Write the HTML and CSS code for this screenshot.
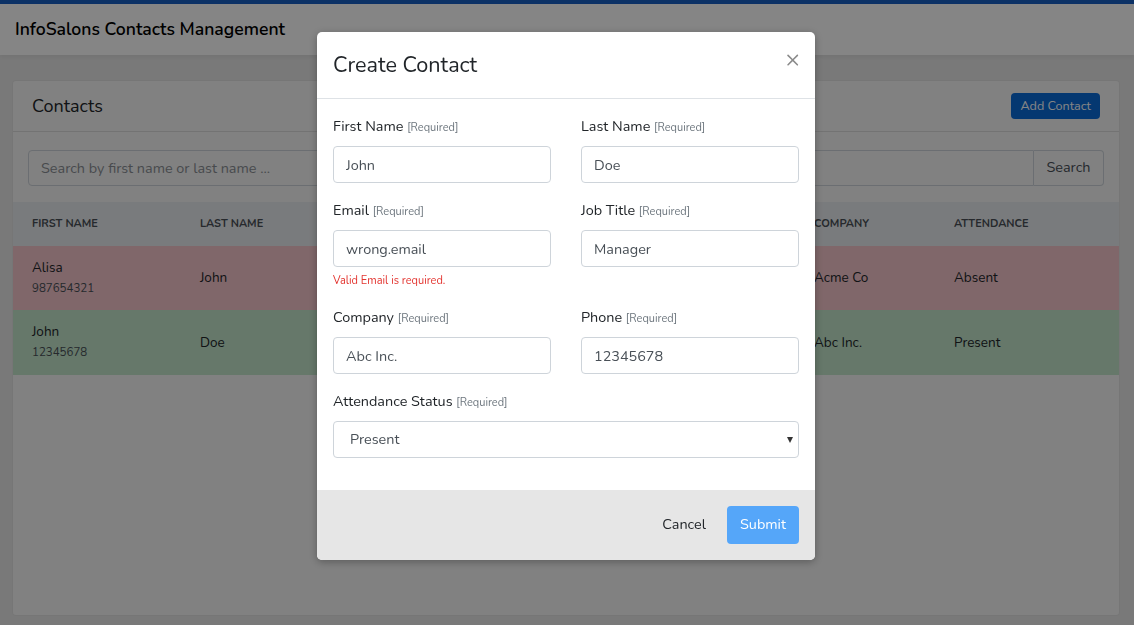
FILE: index.html
```html
<!DOCTYPE html>
<html lang="en">
<head>
<meta charset="utf-8">
<title>InfoSalons Contacts Management</title>
<link rel="stylesheet" href="styles.css">
</head>
<body>
<div class="app">
  <nav class="navbar">
    <span class="brand">InfoSalons Contacts Management</span>
  </nav>
  <main class="main">
    <section class="card">
      <div class="card-header">
        <h2 class="card-title">Contacts</h2>
        <button class="btn btn-primary btn-sm" type="button">Add Contact</button>
      </div>
      <div class="card-body">
        <div class="input-group">
          <input class="form-control search-input" type="text" placeholder="Search by first name or last name ...">
          <button class="btn btn-outline" type="button">Search</button>
        </div>
      </div>
      <table class="table">
        <colgroup>
          <col class="c-first"><col class="c-last"><col class="c-hidden"><col class="c-company"><col class="c-att">
        </colgroup>
        <thead>
          <tr>
            <th>First Name</th><th>Last Name</th><th></th><th>Company</th><th>Attendance</th>
          </tr>
        </thead>
        <tbody>
          <tr class="row-danger">
            <td><div class="name">Alisa</div><div class="phone">987654321</div></td>
            <td>John</td><td></td><td>Acme Co</td><td>Absent</td>
          </tr>
          <tr class="row-success">
            <td><div class="name">John</div><div class="phone">12345678</div></td>
            <td>Doe</td><td></td><td>Abc Inc.</td><td>Present</td>
          </tr>
        </tbody>
      </table>
    </section>
  </main>
</div>

<div class="backdrop"></div>

<div class="modal" role="dialog">
  <div class="modal-header">
    <h4 class="modal-title">Create Contact</h4>
    <button class="close" type="button" aria-label="Close">&times;</button>
  </div>
  <form class="modal-body">
    <div class="form-row">
      <div class="form-group">
        <label class="label">First Name <small class="req">[Required]</small></label>
        <input class="form-control" type="text" value="John">
      </div>
      <div class="form-group">
        <label class="label">Last Name <small class="req">[Required]</small></label>
        <input class="form-control" type="text" value="Doe">
      </div>
    </div>
    <div class="form-row">
      <div class="form-group">
        <label class="label">Email <small class="req">[Required]</small></label>
        <input class="form-control" type="text" value="wrong.email">
        <div class="error">Valid Email is required.</div>
      </div>
      <div class="form-group">
        <label class="label">Job Title <small class="req">[Required]</small></label>
        <input class="form-control" type="text" value="Manager">
      </div>
    </div>
    <div class="form-row">
      <div class="form-group">
        <label class="label">Company <small class="req">[Required]</small></label>
        <input class="form-control" type="text" value="Abc Inc.">
      </div>
      <div class="form-group">
        <label class="label">Phone <small class="req">[Required]</small></label>
        <input class="form-control" type="text" value="12345678">
      </div>
    </div>
    <div class="form-group last">
      <label class="label">Attendance Status <small class="req">[Required]</small></label>
      <div class="select-wrap">
        <select class="form-control select">
          <option>Present</option>
          <option>Absent</option>
        </select>
      </div>
    </div>
  </form>
  <div class="modal-footer">
    <button class="btn btn-link" type="button">Cancel</button>
    <button class="btn btn-submit" type="button">Submit</button>
  </div>
</div>
</body>
</html>
```
FILE: styles.css
```css
* { box-sizing: border-box; }
html, body { margin: 0; padding: 0; }
body {
  font-family: "Nunito", "Lato", "Open Sans", sans-serif;
  font-size: 14.4px;
  line-height: 1.6;
  color: #212529;
  background: #e8e8e8;
  height: 625px;
  overflow: hidden;
}
.app { border-top: 4px solid #1860c4; }
.navbar {
  height: 51px;
  background: #fff;
  display: flex;
  align-items: center;
  padding: 0 15px;
  box-shadow: 0 2px 4px rgba(0,0,0,.06);
}
.brand { font-size: 17.6px; font-weight: 600; color: #000; }
.main { padding: 25px 14px 0 12px; }
.card {
  background: #f7f7f7;
  border-radius: 4px;
  border: 1px solid rgba(0,0,0,.08);
  height: 536px;
}
.card-header {
  height: 51px;
  display: flex;
  align-items: center;
  justify-content: space-between;
  padding: 0 19px 0 19px;
  border-bottom: 1px solid rgba(0,0,0,.1);
}
.card-title { margin: 0; font-size: 18px; font-weight: 400; }
.btn {
  font-family: inherit;
  border: 1px solid transparent;
  border-radius: 4px;
  cursor: pointer;
  font-size: 14.4px;
  line-height: 1.6;
  padding: 6px 12px;
}
.btn-primary { background: #0a6bd9; color: #fff; }
.btn-sm { font-size: 12.6px; padding: 3px 8px; line-height: 1.5; }
.card-body { padding: 18px 15px 16px 15px; }
.input-group { display: flex; }
.form-control {
  display: block;
  width: 100%;
  height: 37px;
  padding: 6px 12px;
  font-family: inherit;
  font-size: 14.4px;
  line-height: 1.6;
  color: #495057;
  background: #fff;
  border: 1px solid #ced4da;
  border-radius: 4px;
}
.search-input { flex: 1; border-radius: 4px 0 0 4px; background: #f7f7f7; height: 36px; }
.search-input::placeholder { color: #8a8f95; }
.btn-outline {
  border-color: #ced4da;
  border-left: none;
  background: #f7f7f7;
  color: #495057;
  border-radius: 0 4px 4px 0;
  width: 70px;
  height: 36px;
  padding: 0;
}
.table { width: 100%; border-collapse: collapse; table-layout: fixed; }
.c-first { width: 168px; }
.c-last { width: 168px; }
.c-hidden { width: 446px; }
.c-company { width: 140px; }
.c-att { width: auto; }
.table th {
  background: #e9ecef;
  color: #495057;
  text-transform: uppercase;
  font-size: 11px;
  font-weight: 700;
  text-align: left;
  height: 44px;
  padding: 0 19px;
}
.table td {
  height: 64px;
  padding: 0 19px;
  font-size: 13.5px;
  color: #212529;
  vertical-align: middle;
}
.row-danger td { background: #f5c6cb; }
.row-success td { background: #c3e6cb; }
.row-success td { height: 65px; }
.name { font-size: 13.5px; line-height: 20px; }
.phone { font-size: 11.5px; line-height: 21px; color: #495057; }

.backdrop {
  position: fixed;
  inset: 0;
  background: rgba(0,0,0,.48);
}
.modal {
  position: fixed;
  top: 32px;
  left: 317px;
  width: 498px;
  background: #fff;
  border-radius: 5px;
  box-shadow: 0 2px 8px rgba(0,0,0,.3);
  overflow: hidden;
}
.modal-header {
  height: 67px;
  display: flex;
  align-items: center;
  justify-content: space-between;
  padding: 0 16px;
  border-bottom: 1px solid #dee2e6;
}
.modal-title { margin: 0; font-size: 21.6px; font-weight: 400; color: #212529; }
.close {
  background: none;
  border: none;
  font-size: 24px;
  line-height: 1;
  color: #8a8a8a;
  padding: 0;
  margin-right: -1px;
  margin-top: -13px;
  font-family: "Nunito", "Lato", sans-serif;
  cursor: pointer;
}
.modal-body { padding: 16px 16px 16px 16px; display: block; }
.form-row { display: flex; gap: 30px; }
.form-row .form-group { flex: 1; }
.form-group { margin-bottom: 16px; }
.form-group.last { margin-bottom: 16px; }
.label { display: block; margin-bottom: 7px; font-size: 14.4px; line-height: 22px; }
.req { font-size: 11px; color: #6c757d; }
.error { color: #e3342f; font-size: 11px; margin-top: 5px; line-height: 18px; }
.select-wrap { position: relative; }
.select { appearance: none; -webkit-appearance: none; padding-left: 16px; }
.select-wrap::after {
  content: "";
  position: absolute;
  right: 6px;
  top: 16px;
  border-left: 3.5px solid transparent;
  border-right: 3.5px solid transparent;
  border-top: 6px solid #333;
}
.modal-footer {
  background: #e6e6e6;
  height: 70px;
  display: flex;
  align-items: center;
  justify-content: flex-end;
  gap: 8px;
  padding: 0 16px;
}
.btn-link { background: none; color: #212529; padding: 6px 12px; }
.btn-submit { background: #55a6f9; color: #fff; width: 72px; height: 38px; padding: 0; }
```
